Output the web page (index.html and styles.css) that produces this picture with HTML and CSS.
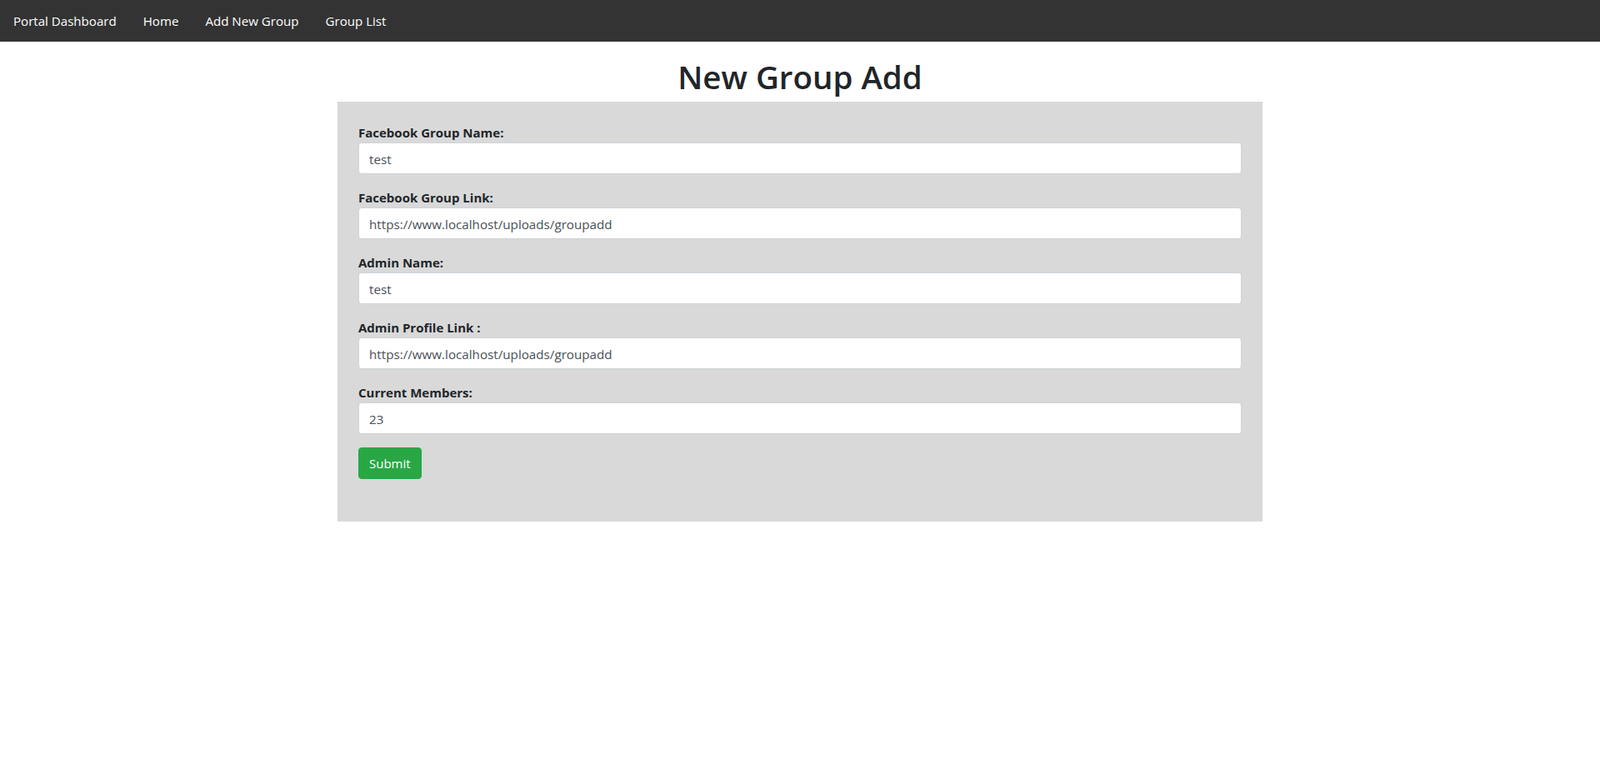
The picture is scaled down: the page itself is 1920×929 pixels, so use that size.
FILE: index.html
```html
<!DOCTYPE html>
<html lang="en">
<head>
<meta charset="utf-8">
<title>New Group Add</title>
<link rel="stylesheet" href="styles.css">
</head>
<body>
<nav class="navbar">
  <a class="nav-link brand" href="#">Portal Dashboard</a>
  <a class="nav-link" href="#">Home</a>
  <a class="nav-link" href="#">Add New Group</a>
  <a class="nav-link" href="#">Group List</a>
</nav>
<main class="container">
  <h1 class="title">New Group Add</h1>
  <form class="panel">
    <div class="field">
      <label class="label" for="gname">Facebook Group Name:</label>
      <input class="input" id="gname" type="text" value="test">
    </div>
    <div class="field">
      <label class="label" for="glink">Facebook Group Link:</label>
      <input class="input" id="glink" type="text" value="https://www.localhost/uploads/groupadd">
    </div>
    <div class="field">
      <label class="label" for="aname">Admin Name:</label>
      <input class="input" id="aname" type="text" value="test">
    </div>
    <div class="field">
      <label class="label" for="alink">Admin Profile Link :</label>
      <input class="input" id="alink" type="text" value="https://www.localhost/uploads/groupadd">
    </div>
    <div class="field">
      <label class="label" for="members">Current Members:</label>
      <input class="input" id="members" type="text" value="23">
    </div>
    <button class="btn-submit" type="button">Submit</button>
  </form>
</main>
</body>
</html>
```
FILE: styles.css
```css
html, body {
  margin: 0;
  padding: 0;
  background: #fff;
}
body {
  font-family: "Open Sans", "Noto Sans", sans-serif;
  font-size: 15px;
  color: #212529;
}
.navbar {
  height: 50px;
  background: #333;
  display: flex;
  align-items: center;
}
.nav-link {
  color: #fff;
  text-decoration: none;
  padding: 0 16px;
  font-size: 15.1px;
  line-height: 24px;
}
.container {
  width: 1110px;
  margin: 0 auto;
}
.title {
  margin: 18px 0 6px;
  font-size: 38.5px;
  font-weight: 600;
  line-height: 48px;
  text-align: center;
  color: #212529;
}
.panel {
  background: #d9d9d9;
  padding: 25px 25px 51px;
}
.field {
  margin-bottom: 16px;
}
.label {
  display: block;
  font-weight: 700;
  font-size: 15px;
  line-height: 24px;
}
.input {
  display: block;
  width: 100%;
  box-sizing: border-box;
  height: 38px;
  padding: 7px 12px 5px;
  border: 1px solid #ced4da;
  border-radius: 4px;
  background: #fff;
  font-family: inherit;
  font-size: 15.2px;
  color: #495057;
}
.btn-submit {
  display: block;
  height: 38px;
  padding: 6px 12px;
  background: #28a745;
  border: 1px solid #28a745;
  border-radius: 4px;
  color: #fff;
  font-family: inherit;
  font-size: 15px;
  line-height: 24px;
}
```
